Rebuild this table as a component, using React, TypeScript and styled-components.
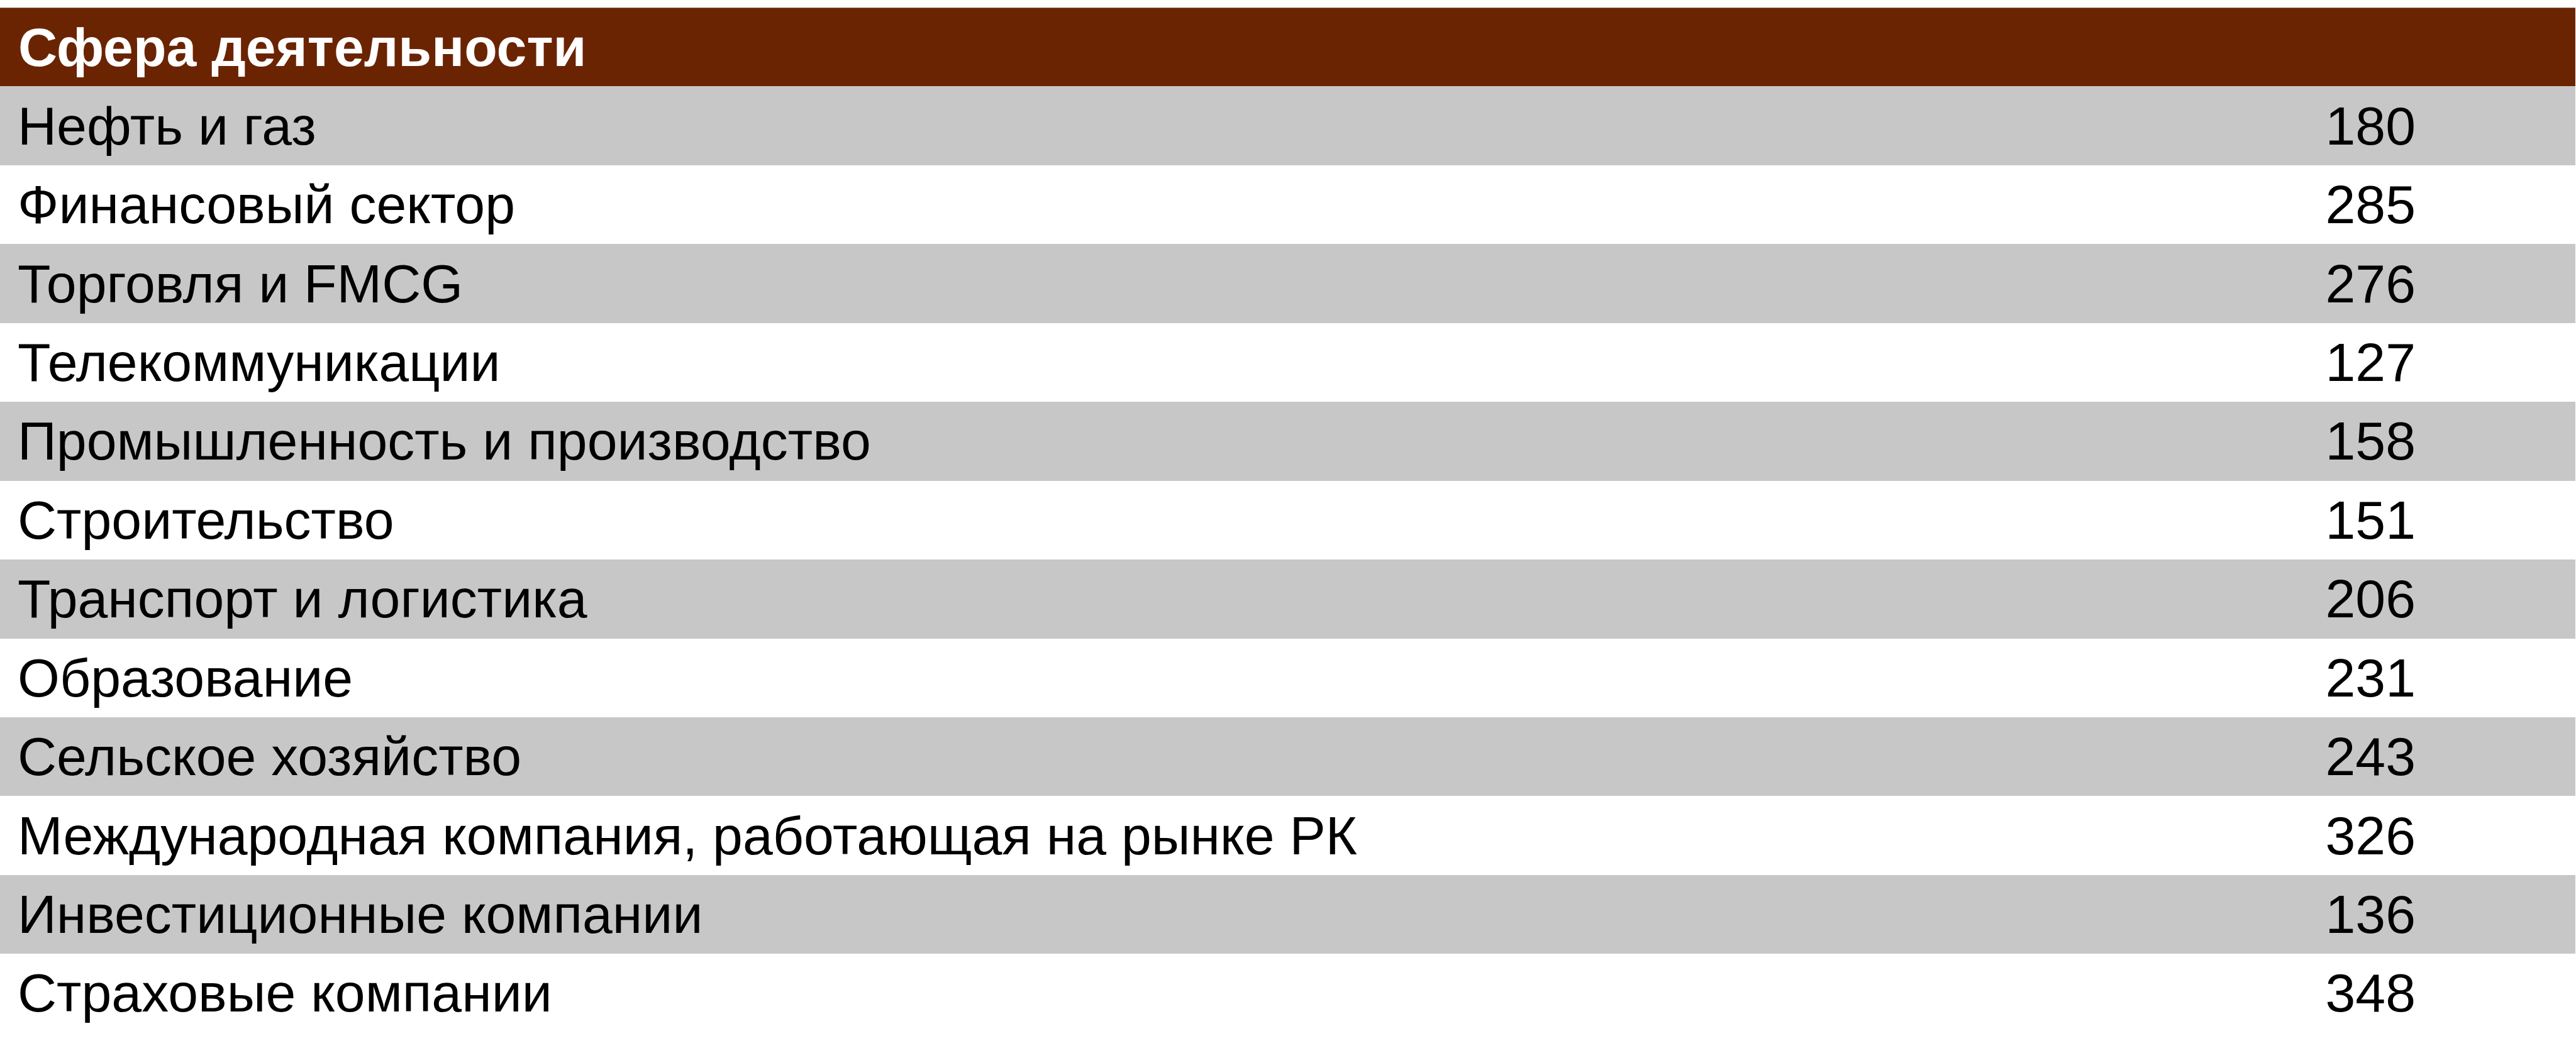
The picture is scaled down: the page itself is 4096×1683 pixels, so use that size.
import * as React from 'react'
import styled, { createGlobalStyle } from 'styled-components'

const GlobalStyle = createGlobalStyle`
  html, body {
    margin: 0;
    padding: 0;
    background: #ffffff;
  }
  body {
    font-family: 'Liberation Sans', Arial, sans-serif;
  }
`

const Page = styled.div`
  width: 4096px;
  height: 1683px;
  padding-top: 12px;
  box-sizing: border-box;
  background: #ffffff;
`

const Table = styled.div`
  display: grid;
  grid-template-columns: 1fr 400px 254px;
  grid-auto-rows: 125.45px;
  width: 4095px;
`

const HeaderCell = styled.div`
  grid-column: 1 / -1;
  display: flex;
  align-items: center;
  padding-left: 29px;
  background: #6b2402;
  border-top: 1px solid #8e6a5e;
  box-sizing: border-box;
  color: #ffffff;
  font-weight: 700;
  font-size: 86px;
`

const Row = styled.div<{ $shaded: boolean }>`
  grid-column: 1 / -1;
  display: grid;
  grid-template-columns: subgrid;
  align-items: center;
  background: ${({ $shaded }) => ($shaded ? '#c7c7c7' : '#ffffff')};
  color: #000000;
  font-size: 86px;
`

const Label = styled.span`
  padding-left: 28px;
  white-space: nowrap;
`

const Value = styled.span`
  text-align: right;
`

const rows: [string, number][] = [
  ['Нефть и газ', 180],
  ['Финансовый сектор', 285],
  ['Торговля и FMCG', 276],
  ['Телекоммуникации', 127],
  ['Промышленность и производство', 158],
  ['Строительство', 151],
  ['Транспорт и логистика', 206],
  ['Образование', 231],
  ['Сельское хозяйство', 243],
  ['Международная компания, работающая на рынке РК', 326],
  ['Инвестиционные компании', 136],
  ['Страховые компании', 348],
]

const App = () => {
  return (
    <Page>
      <GlobalStyle />
      <Table>
        <HeaderCell>Сфера деятельности</HeaderCell>
        {rows.map(([name, count], i) => (
          <Row key={name} $shaded={i % 2 === 0}>
            <Label>{name}</Label>
            <Value>{count}</Value>
            <span />
          </Row>
        ))}
      </Table>
    </Page>
  )
}

export default App
